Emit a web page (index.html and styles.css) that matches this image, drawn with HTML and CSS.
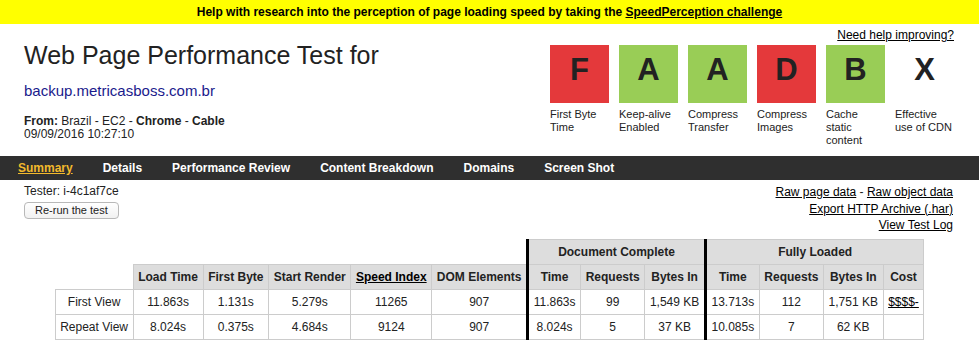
FILE: index.html
```html
<!DOCTYPE html>
<html lang="en">
<head>
    <meta charset="UTF-8">
    <meta name="viewport" content="width=device-width, initial-scale=1.0">
    <title>Web Page Performance Test</title>
    <link rel="stylesheet" href="styles.css">
</head>
<body>
    <div class="banner">
        Help with research into the perception of page loading speed by taking the <a href="#">SpeedPerception challenge</a>
    </div>

    <div class="header">
        <div class="test-info">
            <h1>Web Page Performance Test for</h1>
            <h2 class="url">backup.metricasboss.com.br</h2>
            <p class="from"><b>From:</b> Brazil - EC2 - <b>Chrome</b> - <b>Cable</b><br>09/09/2016 10:27:10</p>
        </div>
        <div class="grades">
            <a class="help" href="#">Need help improving?</a>
            <ul class="grade-list">
                <li class="grade">
                    <span class="grade-box bad">F</span>
                    <span class="grade-label">First Byte Time</span>
                </li>
                <li class="grade">
                    <span class="grade-box good">A</span>
                    <span class="grade-label">Keep-alive Enabled</span>
                </li>
                <li class="grade">
                    <span class="grade-box good">A</span>
                    <span class="grade-label">Compress Transfer</span>
                </li>
                <li class="grade">
                    <span class="grade-box bad">D</span>
                    <span class="grade-label">Compress Images</span>
                </li>
                <li class="grade">
                    <span class="grade-box good">B</span>
                    <span class="grade-label">Cache static content</span>
                </li>
                <li class="grade">
                    <span class="grade-box">X</span>
                    <span class="grade-label">Effective use of CDN</span>
                </li>
            </ul>
        </div>
    </div>

    <ul class="nav">
        <li><a class="current" href="#">Summary</a></li>
        <li><a href="#">Details</a></li>
        <li><a href="#">Performance Review</a></li>
        <li><a href="#">Content Breakdown</a></li>
        <li><a href="#">Domains</a></li>
        <li><a href="#">Screen Shot</a></li>
    </ul>

    <div class="toolbar">
        <div class="tester">
            <div>Tester: i-4c1af7ce</div>
            <button class="rerun">Re-run the test</button>
        </div>
        <div class="raw-links">
            <div><a href="#">Raw page data</a> - <a href="#">Raw object data</a></div>
            <div><a href="#">Export HTTP Archive (.har)</a></div>
            <div><a href="#">View Test Log</a></div>
        </div>
    </div>

    <table class="results">
        <tr>
            <th class="empty" colspan="6"></th>
            <th class="divider" colspan="3">Document Complete</th>
            <th class="divider" colspan="4">Fully Loaded</th>
        </tr>
        <tr>
            <th class="empty"></th>
            <th>Load Time</th>
            <th>First Byte</th>
            <th>Start Render</th>
            <th><a href="#">Speed Index</a></th>
            <th>DOM Elements</th>
            <th class="divider">Time</th>
            <th>Requests</th>
            <th>Bytes In</th>
            <th class="divider">Time</th>
            <th>Requests</th>
            <th>Bytes In</th>
            <th>Cost</th>
        </tr>
        <tr>
            <td>First View</td>
            <td>11.863s</td>
            <td>1.131s</td>
            <td>5.279s</td>
            <td>11265</td>
            <td>907</td>
            <td class="divider">11.863s</td>
            <td>99</td>
            <td>1,549 KB</td>
            <td class="divider">13.713s</td>
            <td>112</td>
            <td>1,751 KB</td>
            <td><a href="#">$$$$-</a></td>
        </tr>
        <tr>
            <td>Repeat View</td>
            <td>8.024s</td>
            <td>0.375s</td>
            <td>4.684s</td>
            <td>9124</td>
            <td>907</td>
            <td class="divider">8.024s</td>
            <td>5</td>
            <td>37 KB</td>
            <td class="divider">10.085s</td>
            <td>7</td>
            <td>62 KB</td>
            <td></td>
        </tr>
    </table>
</body>
</html>
```

FILE: styles.css
```css
body {
    font-family: "Liberation Sans", Arial, sans-serif;
    font-size: 12px;
    color: #222;
    background-color: #fff;
    margin: 0;
    padding: 0;
}
a {
    color: #000;
}
.banner {
    background-color: #ffff00;
    height: 24px;
    line-height: 24px;
    text-align: center;
    font-weight: bold;
    color: #000;
}
.header {
    display: flex;
    justify-content: space-between;
    align-items: flex-start;
    padding: 4px 25px 0 24px;
}
.test-info {
    margin-top: 11px;
}
h1 {
    font-size: 25px;
    font-weight: normal;
    line-height: 32px;
    margin: 0;
    color: #222;
}
.url {
    font-size: 15px;
    font-weight: normal;
    line-height: 18px;
    color: #1a1a8c;
    margin: 11px 0 0 0;
}
.from {
    line-height: 13px;
    margin: 15px 0 0 0;
}
.grades {
    display: flex;
    flex-direction: column;
    align-items: flex-end;
}
.help {
    line-height: 14px;
}
.grade-list {
    list-style-type: none;
    display: flex;
    gap: 10px;
    margin: 3px 0 0 0;
    padding: 0;
}
.grade {
    width: 59px;
    display: flex;
    flex-direction: column;
}
.grade-box {
    height: 58px;
    box-sizing: border-box;
    padding-top: 7px;
    text-align: center;
    font-size: 31px;
    font-weight: bold;
    line-height: 36px;
    color: #222;
}
.grade-box.bad {
    background-color: #e4393b;
}
.grade-box.good {
    background-color: #99cd56;
}
.grade-label {
    font-size: 11px;
    line-height: 13px;
    margin-top: 5px;
}
.nav {
    list-style-type: none;
    display: flex;
    margin: 9px 0 0 0;
    padding: 0 0 0 3px;
    height: 24px;
    background-color: #2f2f2f;
}
.nav a {
    display: block;
    padding: 0 15px;
    line-height: 24px;
    color: #fff;
    font-weight: bold;
    text-decoration: none;
}
.nav a.current {
    color: #f2b92c;
    text-decoration: underline;
}
.toolbar {
    display: flex;
    justify-content: space-between;
    align-items: flex-start;
    padding: 4px 26px 0 24px;
}
.tester {
    line-height: 15px;
}
.rerun {
    display: block;
    margin-top: 3px;
    font-family: "Liberation Sans", Arial, sans-serif;
    font-size: 11px;
    line-height: 15px;
    color: #222;
    padding: 0 10px;
    border: 1px solid #b8b8b8;
    border-radius: 4px;
    background: linear-gradient(#ffffff, #f1f1f1);
}
.raw-links {
    text-align: right;
    line-height: 16.5px;
}
.results {
    border-collapse: collapse;
    margin: 5px auto 0 auto;
    text-align: center;
}
.results th,
.results td {
    border: 1px solid #cccccc;
    padding: 0 4.6px;
    height: 24px;
    white-space: nowrap;
}
.results th {
    background-color: #dddddd;
}
.results th.empty {
    background-color: transparent;
    border: none;
}
.results .divider {
    border-left: 3px solid #000;
}
```
